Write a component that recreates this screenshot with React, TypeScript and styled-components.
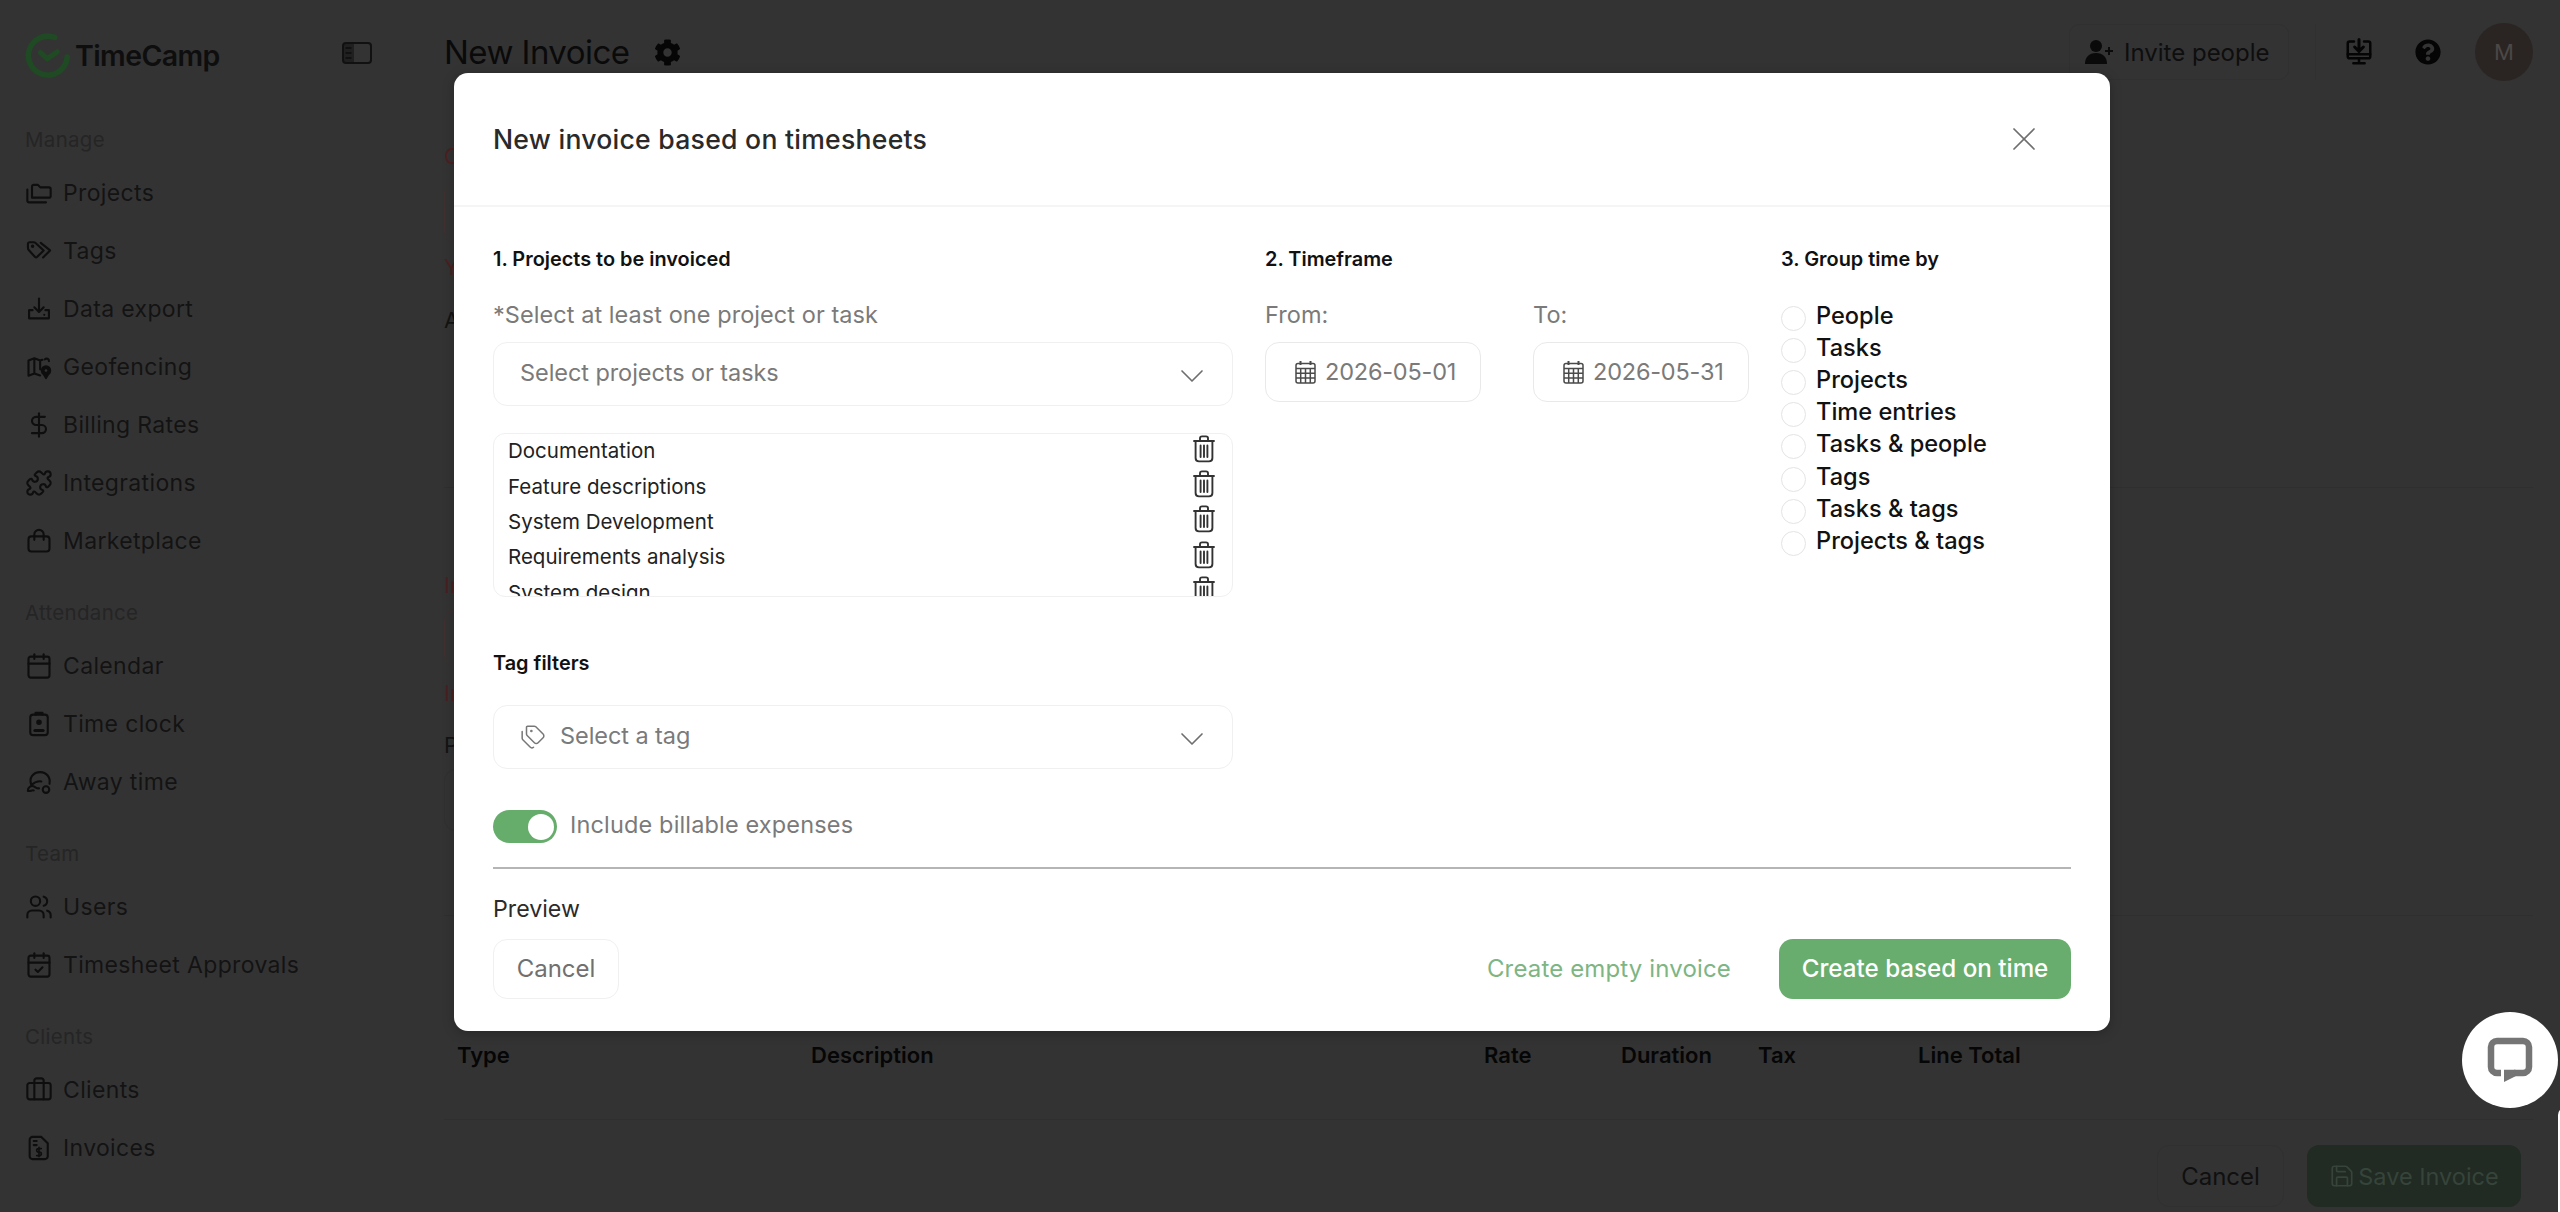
import React from 'react';
import styled, { createGlobalStyle } from 'styled-components';
import {
  Briefcase,
  Calendar,
  CalendarCheck,
  ChevronDown,
  DollarSign,
  Puzzle,
  Save,
  Tags,
  Users,
  X,
} from 'lucide-react';
import { FaCog, FaQuestionCircle } from 'react-icons/fa';

const GlobalStyle = createGlobalStyle`
  html, body {
    margin: 0;
    padding: 0;
    background: #333333;
  }
  body {
    font-family: Inter, "Open Sans", sans-serif;
  }
  * {
    box-sizing: border-box;
  }
`;

const Page = styled.div`
  position: relative;
  display: flex;
  width: 2560px;
  height: 1212px;
  overflow: hidden;
  background: #333333;
`;

/* ---------- sidebar ---------- */

const Sidebar = styled.aside`
  display: flex;
  flex-direction: column;
  flex: 0 0 444px;
  padding: 0 0 0 25px;
`;

const LogoRow = styled.div`
  display: flex;
  align-items: center;
  height: 125px;
  padding-bottom: 15px;
`;

const LogoText = styled.span`
  margin-left: 4px;
  font-size: 28.5px;
  font-weight: 600;
  letter-spacing: -0.6px;
  color: #0e0e0e;
`;

const CollapseIcon = styled.svg`
  margin-left: 122px;
  margin-top: -4px;
`;

const NavSection = styled.section`
  margin-bottom: 29px;
`;

const NavLabel = styled.div`
  height: 30px;
  margin-bottom: 8px;
  font-size: 20.5px;
  line-height: 30px;
  letter-spacing: 0.3px;
  color: #252525;
`;

const NavRow = styled.div`
  display: flex;
  align-items: center;
  height: 58px;
  padding-top: 1px;
  font-size: 23px;
  letter-spacing: 0.35px;
  color: #131313;
`;

const NavIcon = styled.span`
  display: flex;
  align-items: center;
  justify-content: center;
  flex: 0 0 28px;
  margin-right: 10px;
  color: #0e0e0e;
`;

/* ---------- page behind the dialog ---------- */

const Main = styled.main`
  display: flex;
  flex-direction: column;
  flex: 1;
  padding-right: 27px;
`;

const TopBar = styled.header`
  display: flex;
  align-items: center;
  height: 104px;
  flex: 0 0 104px;
`;

const PageTitle = styled.h1`
  margin: 0;
  font-size: 33px;
  font-weight: 400;
  letter-spacing: -0.55px;
  color: #0a0a0a;
`;

const GearWrap = styled.span`
  display: flex;
  margin-left: 25px;
  color: #060606;
`;

const TopActions = styled.div`
  display: flex;
  align-items: center;
  margin-left: auto;
`;

const InviteButton = styled.div`
  display: flex;
  align-items: center;
  gap: 11px;
  width: 220px;
  height: 56px;
  padding-left: 15px;
  border: 1px solid #303030;
  border-radius: 10px;
  font-size: 24px;
  color: #0e0e0e;
`;

const TopIcon = styled.span<{ $left: number }>`
  display: flex;
  margin-left: ${(p) => p.$left}px;
  color: #050505;
`;

const Avatar = styled.div`
  display: flex;
  align-items: center;
  justify-content: center;
  width: 58px;
  height: 58px;
  margin-left: 34px;
  border-radius: 50%;
  background: #2a2523;
  font-size: 22px;
  color: #4c4846;
`;

const Divider = styled.span`
  width: 1px;
  height: 56px;
  margin-left: 26px;
  background: #303030;
`;

const FormBlock = styled.section<{ $height: number }>`
  flex: 0 0 ${(p) => p.$height}px;
  border-bottom: 1px solid #2f2f2f;
`;

const FieldLabel = styled.div<{ $top: number; $error?: boolean }>`
  margin-top: ${(p) => p.$top}px;
  height: 30px;
  font-size: 22px;
  line-height: 30px;
  white-space: nowrap;
  color: ${(p) => (p.$error ? '#4d2020' : '#141414')};
`;

const FieldBox = styled.div<{ $top: number; $height: number; $error?: boolean }>`
  margin-top: ${(p) => p.$top}px;
  height: ${(p) => p.$height}px;
  width: 500px;
  border: 1px solid ${(p) => (p.$error ? '#403030' : '#303030')};
  border-radius: 12px;
`;

const TableHead = styled.div`
  display: grid;
  grid-template-columns: 354px 673px 137px 137px 160px 1fr;
  padding-left: 13px;
  padding-top: 126px;
  font-size: 22px;
  font-weight: 600;
  color: #060606;
`;

const FooterActions = styled.div`
  display: flex;
  justify-content: flex-end;
  gap: 23px;
  margin-top: 25px;
  padding-right: 12px;
`;

const GhostButton = styled.div`
  display: flex;
  align-items: center;
  justify-content: center;
  width: 127px;
  height: 62px;
  border: 1px solid #303030;
  border-radius: 12px;
  font-size: 24px;
  color: #101010;
`;

const SaveButton = styled.div`
  display: flex;
  align-items: center;
  justify-content: center;
  gap: 3px;
  width: 214px;
  height: 62px;
  border-radius: 12px;
  background: #212b23;
  font-size: 23.5px;
  color: #36443a;
`;

/* ---------- dialog ---------- */

const Dialog = styled.div`
  position: absolute;
  left: 454px;
  top: 73px;
  display: flex;
  flex-direction: column;
  width: 1656px;
  height: 958px;
  border-radius: 14px;
  background: #ffffff;
  box-shadow: 0 2px 12px rgba(0, 0, 0, 0.25);
`;

const DialogHeader = styled.div`
  display: flex;
  align-items: center;
  justify-content: space-between;
  flex: 0 0 134px;
  padding: 0 66px 0 39px;
  border-bottom: 2px solid #f5f5f5;
`;

const DialogTitle = styled.h2`
  margin: 0;
  font-size: 26.6px;
  font-weight: 500;
  letter-spacing: 0.25px;
  color: #2a2a2a;
`;

const CloseIcon = styled(X)`
  color: #6e6e6e;
`;

const DialogBody = styled.div`
  display: flex;
  flex-direction: column;
  padding: 37px 39px 0;
`;

const Columns = styled.div`
  display: grid;
  grid-template-columns: 740px 484px 290px;
  column-gap: 32px;
`;

const Column = styled.div`
  display: flex;
  flex-direction: column;
`;

const StepTitle = styled.div<{ $top?: number }>`
  height: 30px;
  margin-top: ${(p) => p.$top ?? 0}px;
  font-size: 19.9px;
  font-weight: 600;
  line-height: 30px;
  color: #111111;
`;

const HintLabel = styled.div`
  height: 34px;
  margin-top: 24px;
  font-size: 23.5px;
  line-height: 34px;
  letter-spacing: 0.06px;
  color: #7a7a7a;
`;

const SelectBox = styled.div<{ $top: number }>`
  display: flex;
  align-items: center;
  height: 64px;
  margin-top: ${(p) => p.$top}px;
  padding: 0 26px 3px;
  border: 1px solid #f0f0f0;
  border-radius: 14px;
  font-size: 23.5px;
  letter-spacing: -0.07px;
  color: #7a7a7a;
`;

const TagIcon = styled(Tags)`
  margin-right: 14px;
  margin-top: 3px;
  color: #777777;
`;

const Chevron = styled(ChevronDown)`
  margin-left: auto;
  margin-right: -6px;
  margin-top: 6px;
  color: #6e6e6e;
`;

const PickedList = styled.div`
  height: 164px;
  margin-top: 27px;
  padding: 0 16px 0 14px;
  overflow: hidden;
  border: 1px solid #f0f0f0;
  border-radius: 12px;
`;

const ListInner = styled.div`
  margin-top: -1px;
`;

const PickedRow = styled.div`
  display: flex;
  align-items: center;
  justify-content: space-between;
  height: 35.4px;
  font-size: 20.5px;
  color: #222222;
`;

const TrashSvg = styled.svg`
  margin-bottom: 4px;
`;

const ToggleRow = styled.div`
  display: flex;
  align-items: center;
  height: 33px;
  margin-top: 41px;
  font-size: 23.5px;
  letter-spacing: 0.15px;
  color: #7a7a7a;
`;

const ToggleTrack = styled.span`
  display: flex;
  align-items: center;
  justify-content: flex-end;
  width: 64px;
  height: 33px;
  margin-right: 13px;
  padding-right: 3px;
  border-radius: 17px;
  background: #66ad6c;
`;

const ToggleKnob = styled.span`
  width: 26px;
  height: 26px;
  border-radius: 50%;
  background: #ffffff;
`;

const ToggleText = styled.span`
  padding-bottom: 5px;
`;

const DateFields = styled.div`
  display: grid;
  grid-template-columns: 216px 216px;
  column-gap: 52px;
`;

const DateBox = styled.div`
  display: flex;
  align-items: center;
  gap: 9px;
  height: 60px;
  margin-top: 10px;
  padding-left: 29px;
  border: 1px solid #e9e9e9;
  border-radius: 14px;
  font-size: 23.5px;
  letter-spacing: -0.2px;
  color: #7a7a7a;
`;

const DateText = styled.span`
  padding-bottom: 2px;
`;

const RadioList = styled.div`
  display: flex;
  flex-direction: column;
  margin-top: 25px;
`;

const RadioRow = styled.div`
  display: flex;
  align-items: center;
  height: 32.2px;
  font-size: 23.6px;
  font-weight: 500;
  color: #111111;
`;

const RadioDot = styled.span`
  flex: none;
  width: 25px;
  height: 25px;
  margin-right: 10px;
  margin-top: 6px;
  border: 1px solid #e4e4e4;
  border-radius: 50%;
  background: #ffffff;
`;

const Rule = styled.hr`
  width: 100%;
  height: 2px;
  margin: 24px 0 0;
  border: 0;
  background: #b5b5b5;
`;

const PreviewLabel = styled.div`
  height: 34px;
  margin-top: 23px;
  font-size: 23.2px;
  line-height: 34px;
  color: #2b2b2b;
`;

const DialogFooter = styled.div`
  display: flex;
  align-items: center;
  margin-top: 13px;
`;

const CancelButton = styled.div`
  display: flex;
  align-items: center;
  justify-content: center;
  width: 126px;
  height: 60px;
  padding-bottom: 2px;
  border: 1px solid #f0f0f0;
  border-radius: 14px;
  font-size: 24px;
  color: #707070;
`;

const EmptyLink = styled.div`
  margin-left: auto;
  margin-right: 48px;
  padding-bottom: 2px;
  font-size: 24px;
  letter-spacing: 0.15px;
  color: #7db583;
`;

const PrimaryButton = styled.div`
  display: flex;
  align-items: center;
  justify-content: center;
  width: 292px;
  height: 60px;
  padding-bottom: 2px;
  border-radius: 14px;
  background: #68ad6e;
  font-size: 24.2px;
  font-weight: 500;
  color: #ffffff;
`;

/* ---------- chat widget ---------- */

const ChatBubble = styled.div`
  position: absolute;
  left: 2462px;
  top: 1012px;
  display: flex;
  align-items: center;
  justify-content: center;
  width: 96px;
  height: 96px;
  border-radius: 50%;
  background: #ffffff;
`;

const ChatEdge = styled.div`
  position: absolute;
  left: 2558px;
  top: 1107px;
  width: 20px;
  height: 120px;
  border-radius: 8px 0 0 0;
  background: #ffffff;
`;

/* ---------- drawn icons ---------- */

const Logo = () => (
  <svg width="46" height="46" viewBox="0 0 44 44" fill="none">
    <path
      d="M28.5 5.2A18.6 18.6 0 1 0 40.4 24"
      stroke="#1f4a23"
      strokeWidth="5.4"
      strokeLinecap="round"
    />
    <path
      d="M14.8 19.6l6.4 6 9.6-6.6"
      stroke="#1f4a23"
      strokeWidth="5"
      strokeLinecap="round"
      strokeLinejoin="round"
    />
  </svg>
);

const Line = ({ children, size = 28 }: { children: React.ReactNode; size?: number }) => (
  <svg
    width={size}
    height={size}
    viewBox="0 0 24 24"
    fill="none"
    stroke="currentColor"
    strokeWidth="1.8"
    strokeLinecap="round"
    strokeLinejoin="round"
  >
    {children}
  </svg>
);

const FoldersIcon = () => (
  <Line>
    <path d="M6 16V6.5A1.5 1.5 0 0 1 7.5 5h3.6l2 2.2h7.4A1.5 1.5 0 0 1 22 8.7v5.8A1.5 1.5 0 0 1 20.5 16Z" />
    <path d="M2 9v9.5A1.5 1.5 0 0 0 3.5 20H18" />
  </Line>
);

const FlatTagIcon = () => (
  <Line>
    <path d="M2.5 9V6A1.5 1.5 0 0 1 4 4.500h3.500a2 2 0 0 1 1.300.5l7.200 6.500-5.500 5.500a1.500 1.500 0 0 1-2 0L3 11Q2.500 10.500 2.500 9Z" />
    <path d="M13.500 5l8 6.500-6 6" />
    <circle cx="6.500" cy="8" r=".6" fill="currentColor" />
  </Line>
);

const ExportIcon = () => (
  <Line>
    <path d="M12 3v11" />
    <path d="M8 10.5l4 4 4-4" />
    <path d="M6.5 13h-3v7h17v-7h-3" />
    <path d="M16.5 17h.01" />
  </Line>
);

const GeoIcon = () => (
  <Line>
    <path d="M3 6.5l5-2 5 2 2-.7M13 6.500V14M8 4.500V17.500M3 6.500v13l5-2 5 1.800" />
    <circle cx="18" cy="15" r="3.6" fill="currentColor" />
    <circle cx="18" cy="15" r="1.100" fill="#333333" stroke="none" />
    <path d="M16 18l2 3.500 2-3.500" fill="currentColor" />
    <path d="M17 5.500a2 2 0 0 1 3.500 1.500" />
  </Line>
);

const BagIcon = () => (
  <Line>
    <rect x="3" y="8" width="18" height="13" rx="2.5" />
    <path d="M8 11V6.500a4 4 0 0 1 8 0V11" />
  </Line>
);

const ClockCardIcon = () => (
  <Line>
    <rect x="4.5" y="4" width="15" height="17.5" rx="2.5" />
    <path d="M9 4V2.500h6V4" />
    <circle cx="12" cy="10.5" r="1.5" fill="currentColor" />
    <path d="M8.5 17.5h7" strokeWidth="2.6" />
  </Line>
);

const AwayIcon = () => (
  <Line>
    <path d="M5.5 14.5C3 8.500 7 3.500 13 3.500c5.500 0 9 4.500 8 10" />
    <path d="M2.5 19.5c0-3 3-5 5.500-3.500 1 .6 2 1.500 4 1.500" />
    <path d="M2.5 19.5c2 .9 3-.8 5-.3" />
    <path d="M5.5 14.5c3-2.500 5.500-3.500 8.500-3" />
    <circle cx="18" cy="18.5" r="2.8" />
  </Line>
);

const InvoiceFileIcon = () => (
  <Line>
    <path d="M6.5 2.5H14l5.500 5.500v11a2.500 2.500 0 0 1-2.500 2.500H6.500A2.500 2.500 0 0 1 4 19V5a2.500 2.500 0 0 1 2.500-2.500Z" />
    <path d="M7.5 6H10M7.5 9.5H10" />
    <path d="M14 12.5h-2.500a1.500 1.500 0 0 0 0 3h1a1.500 1.500 0 0 1 0 3H10M12 11.500v8" strokeWidth="1.4" />
  </Line>
);

const TrashIcon = () => (
  <TrashSvg width="24" height="28" viewBox="0 0 24 28" fill="none" stroke="#333333" strokeWidth="1.9" strokeLinecap="round">
    <path d="M2 6h20" />
    <path d="M8 6V3.200C8 2 9 1.400 10 1.400h4c1 0 2 .6 2 1.800V6" />
    <path d="M3.6 6v17c0 2 1.400 3.400 3.400 3.400h10c2 0 3.400-1.400 3.400-3.400V6" />
    <path d="M8.6 10.500v11.500M12 10.500v11.500M15.400 10.500v11.500" />
  </TrashSvg>
);

const GridCalendarIcon = () => (
  <svg width="21" height="24" viewBox="0 0 21 24" fill="none" stroke="#4a4a4a" strokeWidth="1.5">
    <rect x="1" y="3.5" width="19" height="19.5" rx="2" />
    <path d="M1 8.5h19M1 13.2h19M1 18h19M5.700 8.500V23M10.500 8.500V23M15.300 8.500V23" />
    <path d="M5.5 1v4M15.500 1v4" strokeWidth="2" />
  </svg>
);

const ChatIcon = () => (
  <svg width="46" height="46" viewBox="0 0 46 46" fill="none">
    <path
      d="M14 36H10a6 6 0 0 1-6-6V10a6 6 0 0 1 6-6h26a6 6 0 0 1 6 6v20a6 6 0 0 1-6 6H27"
      stroke="#757575"
      strokeWidth="6.5"
      fill="none"
    />
    <path d="M17 45V32.800h11.500v6.500Z" fill="#757575" />
  </svg>
);

const MonitorDownloadIcon = () => (
  <Line size={30}>
    <path d="M8 3.5H4.500A1.500 1.500 0 0 0 3 5v10.500A1.500 1.500 0 0 0 4.500 17h15a1.500 1.500 0 0 0 1.500-1.500V5a1.500 1.500 0 0 0-1.500-1.500H16" strokeWidth="2" />
    <path d="M12 2v9M8.5 8l3.500 3.500L15.500 8" strokeWidth="2.4" />
    <path d="M3 13.8h18M12 17v4M7.500 21h9" strokeWidth="2" />
  </Line>
);

const InviteIcon = () => (
  <svg width="28" height="26" viewBox="0 0 28 26" fill="#0a0a0a">
    <circle cx="11" cy="7" r="6" />
    <path d="M0 25c0-7 4-11 11-11s11 4 11 11Z" />
    <path d="M23 8h2v3h3v2h-3v3h-2v-3h-3v-2h3Z" />
  </svg>
);

const navSections = [
  {
    label: 'Manage',
    items: [
      { name: 'Projects', icon: <FoldersIcon /> },
      { name: 'Tags', icon: <FlatTagIcon /> },
      { name: 'Data export', icon: <ExportIcon /> },
      { name: 'Geofencing', icon: <GeoIcon /> },
      { name: 'Billing Rates', icon: <DollarSign size={28} strokeWidth={1.8} /> },
      { name: 'Integrations', icon: <Puzzle size={28} strokeWidth={1.8} /> },
      { name: 'Marketplace', icon: <BagIcon /> },
    ],
  },
  {
    label: 'Attendance',
    items: [
      { name: 'Calendar', icon: <Calendar size={28} strokeWidth={1.8} /> },
      { name: 'Time clock', icon: <ClockCardIcon /> },
      { name: 'Away time', icon: <AwayIcon /> },
    ],
  },
  {
    label: 'Team',
    items: [
      { name: 'Users', icon: <Users size={28} strokeWidth={1.8} /> },
      { name: 'Timesheet Approvals', icon: <CalendarCheck size={28} strokeWidth={1.8} /> },
    ],
  },
  {
    label: 'Clients',
    items: [
      { name: 'Clients', icon: <Briefcase size={28} strokeWidth={1.8} /> },
      { name: 'Invoices', icon: <InvoiceFileIcon /> },
    ],
  },
];

const pickedItems = [
  'Documentation',
  'Feature descriptions',
  'System Development',
  'Requirements analysis',
  'System design',
];

const groupOptions = [
  'People',
  'Tasks',
  'Projects',
  'Time entries',
  'Tasks & people',
  'Tags',
  'Tasks & tags',
  'Projects & tags',
];

const tableColumns = ['Type', 'Description', 'Rate', 'Duration', 'Tax', 'Line Total'];

export default function App() {
  return (
    <Page>
      <GlobalStyle />
      <Sidebar>
        <LogoRow>
          <Logo />
          <LogoText>TimeCamp</LogoText>
          <CollapseIcon width="30" height="22" viewBox="0 0 30 22" fill="none">
            <rect x="1" y="1" width="28" height="20" rx="3" stroke="#111111" strokeWidth="2" />
            <rect x="1" y="1" width="11" height="20" fill="#111111" opacity="0.55" />
            <path d="M3.5 6h6M3.500 11h6M3.500 16h6" stroke="#111111" strokeWidth="2" />
          </CollapseIcon>
        </LogoRow>
        {navSections.map((section) => (
          <NavSection key={section.label}>
            <NavLabel>{section.label}</NavLabel>
            {section.items.map((item) => (
              <NavRow key={item.name}>
                <NavIcon>{item.icon}</NavIcon>
                {item.name}
              </NavRow>
            ))}
          </NavSection>
        ))}
      </Sidebar>

      <Main>
        <TopBar>
          <PageTitle>New Invoice</PageTitle>
          <GearWrap>
            <FaCog size={27} />
          </GearWrap>
          <TopActions>
            <InviteButton>
              <InviteIcon />
              Invite people
            </InviteButton>
            <Divider />
            <TopIcon $left={28}>
              <MonitorDownloadIcon />
            </TopIcon>
            <TopIcon $left={41}>
              <FaQuestionCircle size={26} />
            </TopIcon>
            <Avatar>M</Avatar>
          </TopActions>
        </TopBar>

        <FormBlock $height={384}>
          <FieldLabel $top={37} $error>
            Client
          </FieldLabel>
          <FieldBox $top={11} $height={61} $error />
          <FieldLabel $top={9} $error>
            You must select a client
          </FieldLabel>
          <FieldLabel $top={23}>Address</FieldLabel>
        </FormBlock>

        <FormBlock $height={428}>
          <FieldLabel $top={82} $error>
            Invoice number
          </FieldLabel>
          <FieldBox $top={9} $height={58} $error />
          <FieldLabel $top={11} $error>
            Invoice number is required
          </FieldLabel>
          <FieldLabel $top={22}>Payment terms</FieldLabel>
          <FieldBox $top={9} $height={62} />
        </FormBlock>

        <FormBlock $height={204}>
          <TableHead>
            {tableColumns.map((col) => (
              <span key={col}>{col}</span>
            ))}
          </TableHead>
        </FormBlock>

        <FooterActions>
          <GhostButton>Cancel</GhostButton>
          <SaveButton>
            <Save size={26} strokeWidth={1.6} />
            Save Invoice
          </SaveButton>
        </FooterActions>
      </Main>

      <Dialog>
        <DialogHeader>
          <DialogTitle>New invoice based on timesheets</DialogTitle>
          <CloseIcon size={40} strokeWidth={1.05} />
        </DialogHeader>
        <DialogBody>
          <Columns>
            <Column>
              <StepTitle>1. Projects to be invoiced</StepTitle>
              <HintLabel>*Select at least one project or task</HintLabel>
              <SelectBox $top={10}>
                Select projects or tasks
                <Chevron size={40} strokeWidth={1} />
              </SelectBox>
              <PickedList>
                <ListInner>
                  {pickedItems.map((item) => (
                    <PickedRow key={item}>
                      {item}
                      <TrashIcon />
                    </PickedRow>
                  ))}
                </ListInner>
              </PickedList>
              <StepTitle $top={51}>Tag filters</StepTitle>
              <SelectBox $top={27}>
                <TagIcon size={26} strokeWidth={1.4} />
                Select a tag
                <Chevron size={40} strokeWidth={1} />
              </SelectBox>
              <ToggleRow>
                <ToggleTrack>
                  <ToggleKnob />
                </ToggleTrack>
                <ToggleText>Include billable expenses</ToggleText>
              </ToggleRow>
            </Column>

            <Column>
              <StepTitle>2. Timeframe</StepTitle>
              <DateFields>
                <div>
                  <HintLabel>From:</HintLabel>
                  <DateBox>
                    <GridCalendarIcon />
                    <DateText>2026-05-01</DateText>
                  </DateBox>
                </div>
                <div>
                  <HintLabel>To:</HintLabel>
                  <DateBox>
                    <GridCalendarIcon />
                    <DateText>2026-05-31</DateText>
                  </DateBox>
                </div>
              </DateFields>
            </Column>

            <Column>
              <StepTitle>3. Group time by</StepTitle>
              <RadioList>
                {groupOptions.map((option) => (
                  <RadioRow key={option}>
                    <RadioDot />
                    {option}
                  </RadioRow>
                ))}
              </RadioList>
            </Column>
          </Columns>

          <Rule />
          <PreviewLabel>Preview</PreviewLabel>
          <DialogFooter>
            <CancelButton>Cancel</CancelButton>
            <EmptyLink>Create empty invoice</EmptyLink>
            <PrimaryButton>Create based on time</PrimaryButton>
          </DialogFooter>
        </DialogBody>
      </Dialog>

      <ChatBubble>
        <ChatIcon />
      </ChatBubble>
      <ChatEdge />
    </Page>
  );
}
